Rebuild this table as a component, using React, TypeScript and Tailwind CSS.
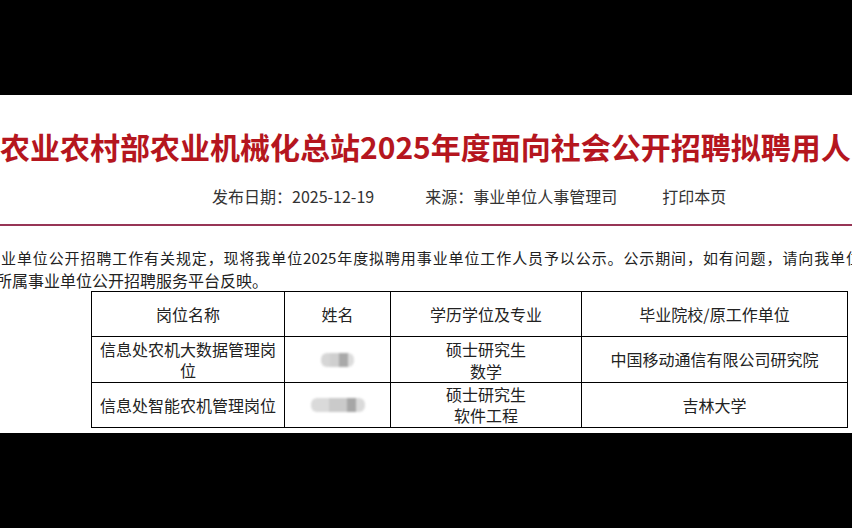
import React from "react";

function Blob({ parts, h = 14 }: { parts: { w: number; c: string }[]; h?: number }) {
  return (
    <div className="flex blur-[1.2px] rounded-[6px] overflow-hidden">
      {parts.map((p, i) => (
        <div key={i} style={{ width: p.w, height: h, background: p.c }} />
      ))}
    </div>
  );
}

const cell =
  "border-r border-b border-black flex flex-col items-center justify-center text-center px-[6px] text-[16px] leading-[21px] text-[#222]";

export default function App() {
  return (
    <div className="w-[852px] h-[528px] bg-black overflow-hidden font-['Noto_Sans_CJK_SC','Noto_Sans',sans-serif]">
      <div className="h-[95px] bg-black" />
      <div className="h-[338px] bg-white overflow-hidden">
        <h1 className="pt-[31px] text-[30px] leading-[40px] font-bold text-[#b5161e] whitespace-nowrap">
          农业农村部农业机械化总站2025年度面向社会公开招聘拟聘用人
        </h1>
        <div className="mt-[18px] flex pl-[212px] text-[16px] leading-[24px] text-[#333] whitespace-nowrap">
          <span>发布日期：2025-12-19</span>
          <span className="ml-[51px]">来源：事业单位人事管理司</span>
          <span className="ml-[45px]">打印本页</span>
        </div>
        <div className="mt-[16px] h-[2px] bg-[#973556]" />
        <div className="mt-[20px] text-[#222]">
          <div className="ml-[1px] w-[860px] text-[15px] leading-[24px] whitespace-nowrap [text-align-last:justify] text-justify">
            业单位公开招聘工作有关规定，现将我单位2025年度拟聘用事业单位工作人员予以公示。公示期间，如有问题，请向我单位
          </div>
          <div className="ml-[-4px] text-[16px] leading-[21px] whitespace-nowrap">
            所属事业单位公开招聘服务平台反映。
          </div>
        </div>
        <div className="ml-[91px] w-[757px] grid grid-cols-[193px_106px_191px_266px] grid-rows-[45px_46px_45px] border-l border-t border-black">
          <div className={cell}>岗位名称</div>
          <div className={cell}>姓名</div>
          <div className={cell}>学历学位及专业</div>
          <div className={cell}>毕业院校/原工作单位</div>

          <div className={cell}>
            <span className="block">信息处农机大数据管理岗位</span>
          </div>
          <div className={cell}>
            <Blob
              parts={[
                { w: 9, c: "#d6d6d6" },
                { w: 9, c: "#cfcfcf" },
                { w: 9, c: "#a9a9a9" },
                { w: 6, c: "#dcdcdc" },
              ]}
            />
          </div>
          <div className={cell}>
            <span className="block leading-[22px]">硕士研究生</span>
            <span className="block leading-[22px]">数学</span>
          </div>
          <div className={cell}>中国移动通信有限公司研究院</div>

          <div className={cell}>信息处智能农机管理岗位</div>
          <div className={cell}>
            <Blob
              parts={[
                { w: 18, c: "#dadada" },
                { w: 18, c: "#cacaca" },
                { w: 9, c: "#a6a6a6" },
                { w: 9, c: "#dadada" },
              ]}
            />
          </div>
          <div className={cell}>
            <span className="block leading-[21px]">硕士研究生</span>
            <span className="block leading-[21px]">软件工程</span>
          </div>
          <div className={cell}>吉林大学</div>
        </div>
      </div>
    </div>
  );
}
